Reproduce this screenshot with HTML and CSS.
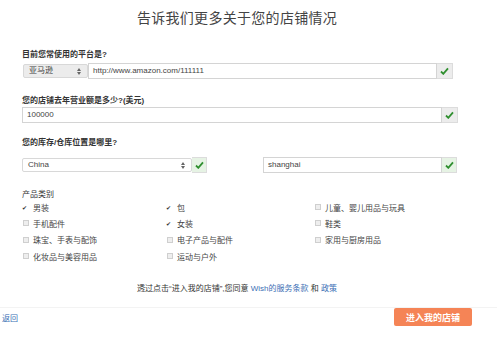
FILE: index.html
```html
<!DOCTYPE html>
<html lang="zh">
<head>
<meta charset="utf-8">
<link rel="stylesheet" href="styles.css">
</head>
<body>
<div class="page">
  <h1 class="title">告诉我们更多关于您的店铺情况</h1>
  <div class="form">
    <div class="label l1">目前您常使用的平台是?</div>
    <div class="row r1">
      <div class="select s1"><span>亚马逊</span><svg class="arr" width="4" height="7" viewBox="0 0 4 7"><path d="M0 3 L2 0 L4 3Z M0 4 L2 7 L4 4Z" fill="#666"/></svg></div>
      <div class="input i1">http://www.amazon.com/111111</div>
      <div class="ok"><svg width="9" height="8" viewBox="0 0 9 8"><path d="M1 4.5 L3.3 6.8 L8 1.3" stroke="#2f8f2f" stroke-width="1.8" fill="none"/></svg></div>
    </div>
    <div class="label l2">您的店铺去年营业额是多少?(美元)</div>
    <div class="row r2">
      <div class="input i2">100000</div>
      <div class="ok"><svg width="9" height="8" viewBox="0 0 9 8"><path d="M1 4.5 L3.3 6.8 L8 1.3" stroke="#2f8f2f" stroke-width="1.8" fill="none"/></svg></div>
    </div>
    <div class="label l3">您的库存/仓库位置是哪里?</div>
    <div class="row r3">
      <div class="select s3"><span>China</span><svg class="arr" width="4" height="7" viewBox="0 0 4 7"><path d="M0 3 L2 0 L4 3Z M0 4 L2 7 L4 4Z" fill="#666"/></svg></div>
      <div class="ok ok-green"><svg width="9" height="8" viewBox="0 0 9 8"><path d="M1 4.5 L3.3 6.8 L8 1.3" stroke="#2f8f2f" stroke-width="1.8" fill="none"/></svg></div>
      <div class="spacer"></div>
      <div class="input i3">shanghai</div>
      <div class="ok ok-green"><svg width="9" height="8" viewBox="0 0 9 8"><path d="M1 4.5 L3.3 6.8 L8 1.3" stroke="#2f8f2f" stroke-width="1.8" fill="none"/></svg></div>
    </div>
    <div class="label l4">产品类别</div>
    <div class="cats">
      <div class="cat"><span class="tick">✔</span>男装</div>
      <div class="cat"><span class="tick">✔</span>包</div>
      <div class="cat"><span class="box"></span>儿童、婴儿用品与玩具</div>
      <div class="cat"><span class="box"></span>手机配件</div>
      <div class="cat"><span class="tick">✔</span>女装</div>
      <div class="cat"><span class="box"></span>鞋类</div>
      <div class="cat"><span class="box"></span>珠宝、手表与配饰</div>
      <div class="cat"><span class="box"></span>电子产品与配件</div>
      <div class="cat"><span class="box"></span>家用与厨房用品</div>
      <div class="cat"><span class="box"></span>化妆品与美容用品</div>
      <div class="cat"><span class="box"></span>运动与户外</div>
      <div class="cat"></div>
    </div>
    <p class="terms">透过点击“进入我的店铺”,您同意 <a class="link">Wish的服务条款</a> 和 <a class="link">政策</a></p>
  </div>
  <div class="bottom">
    <a class="back">返回</a>
    <button class="enter">进入我的店铺</button>
  </div>
</div>
</body>
</html>
```

FILE: styles.css
```css
html, body {
  margin: 0;
  padding: 0;
  background: #fff;
}
body {
  font-family: "Liberation Sans", "Noto Sans CJK SC", sans-serif;
  color: #333;
  width: 497px;
  height: 344px;
  overflow: hidden;
}
.page {
  display: flex;
  flex-direction: column;
}
.title {
  margin: 0;
  padding-top: 8px;
  width: 474px;
  text-align: center;
  font-size: 14px;
  line-height: 20px;
  font-weight: normal;
  color: #444;
  letter-spacing: 0.3px;
}
.form {
  padding-left: 22px;
  display: flex;
  flex-direction: column;
}
.label {
  font-size: 8px;
  line-height: 9px;
  font-weight: bold;
  color: #333;
}
.l1 { margin-top: 22px; margin-bottom: 4px; }
.l2 { margin-top: 17px; margin-bottom: 2px; }
.l3 { margin-top: 15px; margin-bottom: 10px; }
.l4 { margin-top: 17px; font-weight: normal; }
.row {
  display: flex;
  height: 16px;
}
.select {
  box-sizing: border-box;
  height: 14px;
  margin-top: 1px;
  background: #f1f1f1;
  border: 1px solid #d8d8d8;
  border-radius: 2px;
  font-size: 8px;
  line-height: 12px;
  color: #444;
  display: flex;
  align-items: center;
  justify-content: space-between;
  padding: 0 6px 0 5px;
}
.s1 { width: 65px; margin-left: 1px; background: #ececec; }
.s3 { width: 170px; background: #fff; }
.arr { display: block; }
.input {
  box-sizing: border-box;
  height: 16px;
  border: 1px solid #d4d4d4;
  font-size: 8px;
  line-height: 14px;
  padding-left: 4px;
  color: #444;
  background: #fff;
}
.i1 { width: 349px; }
.i2 { width: 420px; }
.i3 { width: 179px; }
.ok {
  box-sizing: border-box;
  width: 16px;
  height: 16px;
  background: #ececec;
  border: 1px solid #dcdcdc;
  border-left: none;
  display: flex;
  align-items: center;
  justify-content: center;
}
.ok-green { background: #e6f3e4; }
.r3 .ok { width: 15px; }
.spacer { width: 56px; }
.cats {
  display: grid;
  grid-template-columns: 144px 148px 160px;
  grid-auto-rows: 16.3px;
  font-size: 8px;
  color: #444;
  margin-left: 0;
}
.cat {
  display: flex;
  align-items: center;
}
.box {
  box-sizing: border-box;
  width: 6px;
  height: 6px;
  border: 1px solid #cfcfcf;
  background: #eee;
  margin-right: 4px;
  margin-left: 1px;
}
.tick {
  font-size: 6px;
  width: 7px;
  margin-right: 4px;
  color: #333;
}
.terms {
  margin: 20px 0 0 0;
  width: 430px;
  text-align: center;
  font-size: 8px;
  line-height: 9px;
  color: #333;
}
.link {
  color: #3b6fb5;
}
.bottom {
  margin-top: 14px;
  border-top: 1px solid #f3f3f3;
  padding: 0 25px 0 2px;
  display: flex;
  justify-content: space-between;
  align-items: center;
  height: 18px;
}
.back {
  font-size: 8px;
  color: #3b6fb5;
}
.enter {
  width: 78px;
  height: 18px;
  border: none;
  border-radius: 2px;
  background: #f58456;
  color: #fff;
  font-family: "Liberation Sans", "Noto Sans CJK SC", sans-serif;
  font-size: 9px;
  font-weight: bold;
  padding: 0;
}
```
